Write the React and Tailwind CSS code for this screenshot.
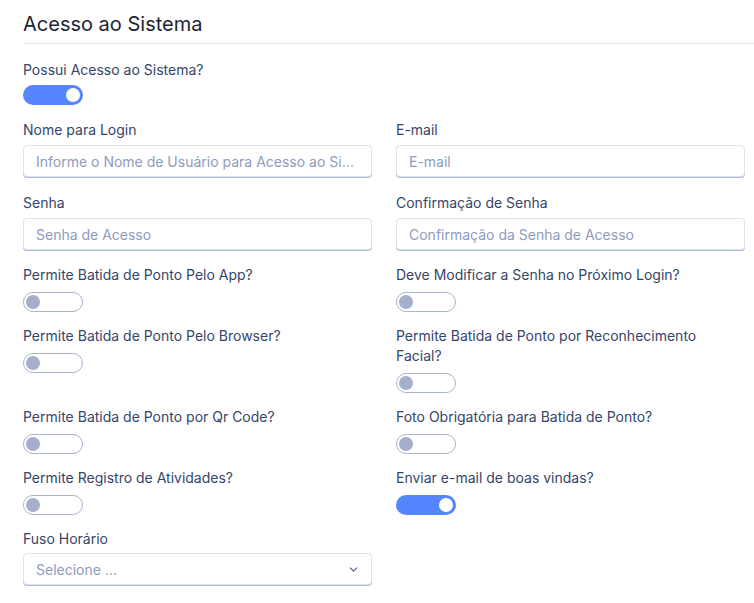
import React from 'react';
import { ChevronDown } from 'lucide-react';

// Campo de formulário: rótulo + controle
const Field = ({ label, children, gap = 'mb-[5px]' }) => (
  <div>
    <div className={`text-[14px] leading-5 text-[#36456a] ${gap}`}>{label}</div>
    {children}
  </div>
);

const TextInput = ({ placeholder }) => (
  <div className="h-8 rounded border border-[#dfe3ee] shadow-[0_1px_0_#aebad6] bg-white px-3 flex items-center">
    <span className="text-[14px] text-[#8e9bbd] truncate">{placeholder}</span>
  </div>
);

const Toggle = ({ on = false }) =>
  on ? (
    <div className="w-[60px] h-5 rounded-full bg-[#5585ff] flex items-center justify-end pr-[3px]">
      <div className="w-[14px] h-[14px] rounded-full bg-white" />
    </div>
  ) : (
    <div className="w-[60px] h-5 rounded-full border border-[#a9b3cf] bg-white flex items-center pl-[2px]">
      <div className="w-[14px] h-[14px] rounded-full bg-[#a5afcb]" />
    </div>
  );

const ToggleField = ({ label, on }) => (
  <Field label={label} gap="mb-[7px]">
    <Toggle on={on} />
  </Field>
);

export default function App() {
  return (
    <div
      className="bg-white min-h-[603px] pl-[23px] pt-[10px]"
      style={{ fontFamily: 'Inter, "Noto Sans", sans-serif' }}
    >
      <h2 className="text-[20px] leading-7 text-[#1d2534] pb-[5px] border-b border-[#e3e5ee]">
        Acesso ao Sistema
      </h2>

      <div className="pr-[9px] pt-[16px]">
        <Field label="Possui Acesso ao Sistema?" gap="mb-[5px]">
          <Toggle on />
        </Field>

        <div className="grid grid-cols-2 gap-x-6 mt-[15px]">
          <Field label="Nome para Login">
            <TextInput placeholder="Informe o Nome de Usuário para Acesso ao Sistema" />
          </Field>
          <Field label="E-mail">
            <TextInput placeholder="E-mail" />
          </Field>
        </div>

        <div className="grid grid-cols-2 gap-x-6 mt-[16px]">
          <Field label="Senha">
            <TextInput placeholder="Senha de Acesso" />
          </Field>
          <Field label="Confirmação de Senha">
            <TextInput placeholder="Confirmação da Senha de Acesso" />
          </Field>
        </div>

        <div className="grid grid-cols-2 gap-x-6 gap-y-[14px] mt-[15px]">
          <ToggleField label="Permite Batida de Ponto Pelo App?" />
          <ToggleField label="Deve Modificar a Senha no Próximo Login?" />
          <ToggleField label="Permite Batida de Ponto Pelo Browser?" />
          <ToggleField label="Permite Batida de Ponto por Reconhecimento Facial?" />
          <ToggleField label="Permite Batida de Ponto por Qr Code?" />
          <ToggleField label="Foto Obrigatória para Batida de Ponto?" />
          <ToggleField label="Permite Registro de Atividades?" />
          <ToggleField label="Enviar e-mail de boas vindas?" on />
        </div>

        <div className="grid grid-cols-2 gap-x-6 mt-[14px]">
          <Field label="Fuso Horário" gap="mb-[4px]">
            <div className="h-8 rounded border border-[#dfe3ee] shadow-[0_1px_0_#aebad6] bg-white pl-3 pr-[11px] flex items-center justify-between">
              <span className="text-[14px] text-[#8e9bbd]">Selecione ...</span>
              <ChevronDown size={13} strokeWidth={2} className="text-[#4b5b86]" />
            </div>
          </Field>
        </div>
      </div>
    </div>
  );
}
